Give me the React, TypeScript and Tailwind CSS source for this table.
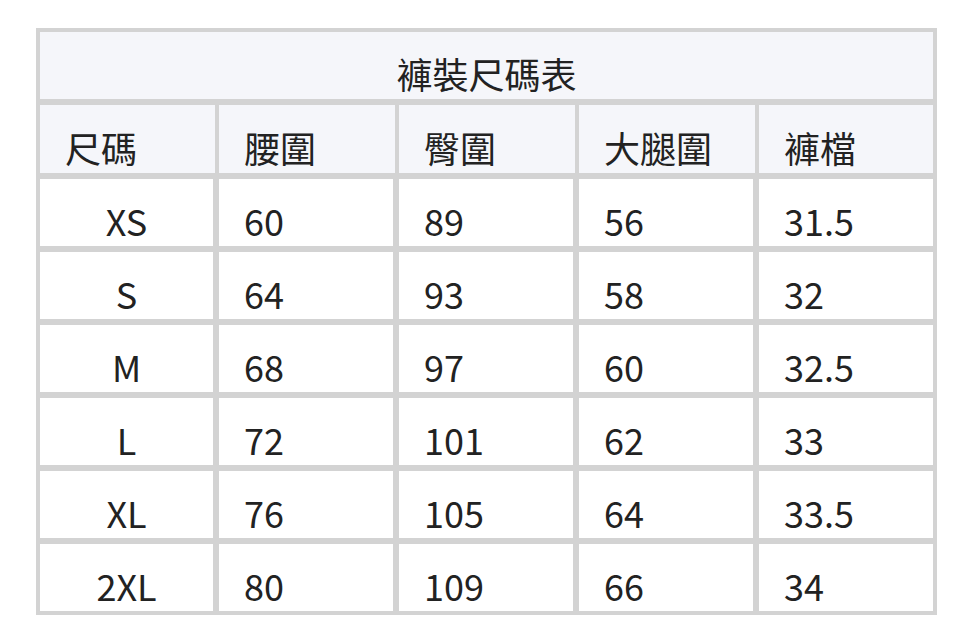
import React from 'react';

const rows = [
  ['XS', '60', '89', '56', '31.5'],
  ['S', '64', '93', '58', '32'],
  ['M', '68', '97', '60', '32.5'],
  ['L', '72', '101', '62', '33'],
  ['XL', '76', '105', '64', '33.5'],
  ['2XL', '80', '109', '66', '34'],
];

const headers = ['尺碼', '腰圍', '臀圍', '大腿圍', '褲檔'];

export default function App() {
  return (
    <div
      className="w-[972px] h-[642px] bg-white pt-[28px] pl-[36px] text-[#222] text-[36px] leading-[normal]"
      style={{ fontFamily: '"Noto Sans CJK TC", "Noto Sans", sans-serif' }}
    >
      <div className="w-[901px] bg-[#d3d3d3] p-[4px] flex flex-col gap-[6px]">
        <div className="h-[67px] bg-[#f5f6fa] flex items-end justify-center">
          褲裝尺碼表
        </div>
        <div className="h-[68px] flex gap-[4px]">
          {headers.map((h, i) => (
            <div
              key={h}
              className={`${i === 0 ? 'w-[175px]' : i === 4 ? 'w-[174px]' : 'w-[176px]'} bg-[#f5f6fa] flex items-end pl-[25px]`}
            >
              {h}
            </div>
          ))}
        </div>
        {rows.map((r) => (
          <div key={r[0]} className="h-[67px] flex gap-[6px]">
            {r.map((c, i) => (
              <div
                key={i}
                className={`${i === 0 ? 'w-[173px] justify-center' : 'w-[174px] pl-[25px]'} bg-white flex items-end`}
              >
                {c}
              </div>
            ))}
          </div>
        ))}
      </div>
    </div>
  );
}
